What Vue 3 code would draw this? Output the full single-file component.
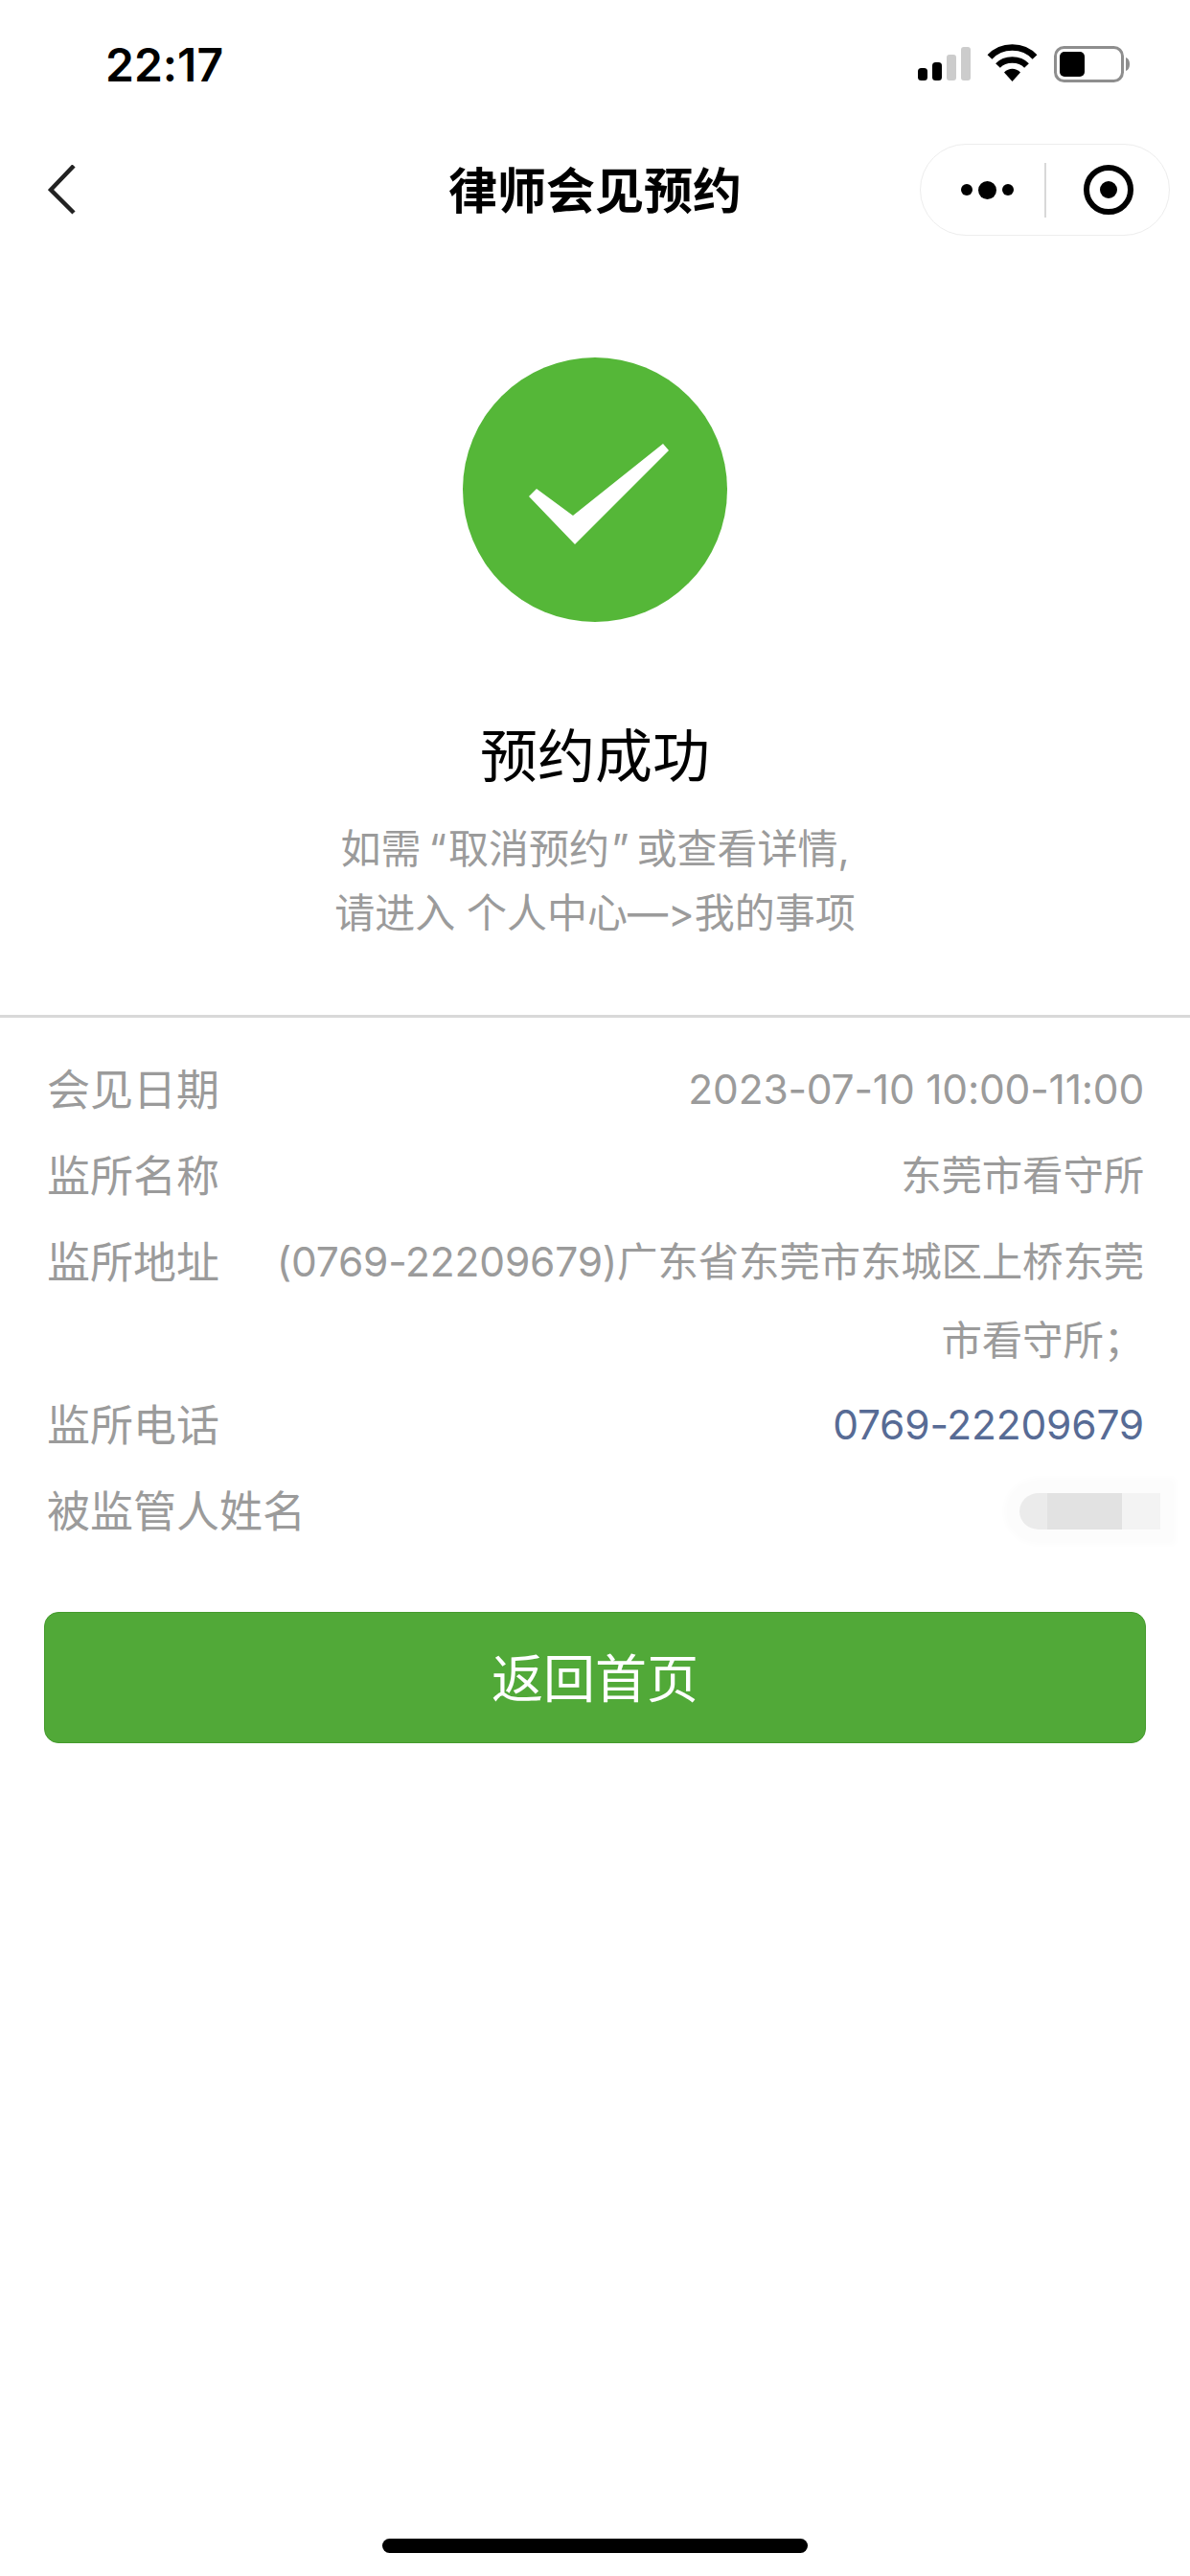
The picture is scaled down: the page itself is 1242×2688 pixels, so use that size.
<template>
  <div class="page">
    <!-- 状态栏 -->
    <div class="status">
      <span class="time">22:17</span>
      <svg class="status-icons" width="230" height="44" viewBox="0 0 230 44">
        <rect x="4" y="26" width="10" height="13" rx="3.5" fill="#000" />
        <rect x="19" y="20" width="10" height="19" rx="3.5" fill="#000" />
        <rect x="34" y="12" width="10" height="27" rx="3" fill="#ccc" />
        <rect x="49" y="4" width="10" height="35" rx="3" fill="#ccc" />
        <path d="M79 14.5C91 1 114 1 126 14.5" fill="none" stroke="#000" stroke-width="6.5" />
        <path d="M87.5 23.5C95 15.5 110 15.5 117.5 23.5" fill="none" stroke="#000" stroke-width="6.5" />
        <path d="M94 30.5C99 25.5 106 25.5 111 30.5L102.5 40Z" fill="#000" />
        <rect x="147.5" y="4.5" width="70" height="35" rx="9" fill="none" stroke="#8e8e8e" stroke-width="3" />
        <rect x="152" y="9" width="26" height="26" rx="5" fill="#000" />
        <path d="M221 15C224 16 225 19 225 22C225 25 224 28 221 29Z" fill="#8e8e8e" />
      </svg>
    </div>

    <!-- 导航栏 -->
    <div class="nav">
      <svg class="back" width="32" height="54" viewBox="0 0 32 54">
        <path d="M27 1L3 26L27 50" fill="none" stroke="#222" stroke-width="4.5" />
      </svg>
      <span class="nav-title">律师会见预约</span>
      <div class="capsule">
        <div class="dots">
          <i class="dot"></i><i class="dot dot-big"></i><i class="dot"></i>
        </div>
        <div class="capsule-line"></div>
        <div class="ring"><i></i></div>
      </div>
    </div>

    <!-- 成功提示 -->
    <div class="result">
      <svg class="ok" width="276" height="276" viewBox="0 0 276 276">
        <circle cx="138" cy="138" r="138" fill="#55b738" />
        <path d="M69 145L77 137L115 165L209 90L215 97L117 195Z" fill="#fff" />
      </svg>
      <h1 class="result-title">预约成功</h1>
      <p class="result-desc">如需<span class="quote-open">“</span>取消预约<span class="quote-close">”</span>或查看详情,<br />请进入 个人中心—&gt;我的事项</p>
    </div>

    <!-- 预约信息 -->
    <div class="info">
      <div v-for="row in rows" :key="row.label" class="row">
        <span class="label">{{ row.label }}</span>
        <span :class="['value', { link: row.link }]">{{ row.value }}</span>
      </div>
      <div class="row">
        <span class="label">被监管人姓名</span>
        <span class="blur"></span>
      </div>
    </div>

    <button class="btn-home">返回首页</button>

    <div class="home-bar"></div>
  </div>
</template>

<script setup>
const rows = [
  { label: '会见日期', value: '2023-07-10 10:00-11:00' },
  { label: '监所名称', value: '东莞市看守所' },
  { label: '监所地址', value: '(0769-22209679)广东省东莞市东城区上桥东莞市看守所；' },
  { label: '监所电话', value: '0769-22209679', link: true }
];
</script>

<style>
body {
  background: #fff;
}
</style>

<style scoped>
.page {
  position: relative;
  height: 2688px;
  overflow: hidden;
  background: #fff;
  font-family: Inter, "Noto Sans CJK SC", sans-serif;
  font-variant-ligatures: none;
  font-feature-settings: "calt" 0;
}

.status {
  display: flex;
  justify-content: space-between;
  align-items: center;
  height: 134px;
  padding: 0 58px 0 110px;
  box-sizing: border-box;
}

.time {
  font-size: 48px;
  font-weight: 600;
  color: #000;
}

.nav {
  position: relative;
  display: flex;
  justify-content: center;
  align-items: center;
  height: 130px;
  padding-bottom: 6px;
  box-sizing: border-box;
}

.back {
  position: absolute;
  left: 50px;
  top: 38px;
}

.nav-title {
  font-size: 51px;
  font-weight: 700;
  color: #000;
}

.capsule {
  position: absolute;
  left: 960px;
  top: 16px;
  width: 261px;
  height: 96px;
  box-sizing: border-box;
  display: flex;
  align-items: center;
  border: 1.5px solid #ededed;
  border-radius: 48px;
}

.dots {
  width: 129px;
  padding-left: 10px;
  box-sizing: border-box;
  display: flex;
  justify-content: center;
  align-items: center;
  gap: 6px;
}

.dot {
  width: 12px;
  height: 12px;
  border-radius: 50%;
  background: #000;
}

.dot-big {
  width: 19px;
  height: 19px;
}

.capsule-line {
  width: 1.5px;
  height: 57px;
  background: #d8d8d8;
}

.ring {
  width: 52px;
  height: 52px;
  margin-left: 39px;
  box-sizing: border-box;
  border: 6px solid #000;
  border-radius: 50%;
  display: flex;
  justify-content: center;
  align-items: center;
}

.ring i {
  width: 18px;
  height: 18px;
  border-radius: 50%;
  background: #000;
}

.result {
  display: flex;
  flex-direction: column;
  align-items: center;
  height: 798px;
  padding-top: 109px;
  box-sizing: border-box;
  border-bottom: 3px solid #d9d9d9;
}

.result-title {
  margin: 102px 0 0;
  font-size: 60px;
  line-height: 76px;
  font-weight: 400;
  color: #000;
}

.result-desc {
  margin: 25px 0 0;
  font-size: 42px;
  line-height: 67px;
  color: #9b9b9b;
  text-align: center;
}

.quote-open {
  padding-left: 8px;
  padding-right: 2px;
}

.quote-close {
  padding-left: 2px;
  padding-right: 8px;
}

.info {
  padding: 34px 48px 0 49px;
}

.row {
  display: flex;
  justify-content: space-between;
  align-items: flex-start;
  margin-bottom: 6px;
}

.label {
  flex-shrink: 0;
  font-size: 45px;
  line-height: 84px;
  color: #9b9b9b;
}

.value {
  width: 920px;
  font-size: 42.5px;
  line-height: 82px;
  letter-spacing: -0.2px;
  color: #9b9b9b;
  text-align: right;
}

.link {
  color: #576b95;
}

/* 姓名打码 */
.blur {
  width: 147px;
  height: 38px;
  margin: 22px -17px 0 0;
  border-radius: 20px 0 0 20px / 50% 0 0 50%;
  background: linear-gradient(90deg, #ebebeb 0 20%, #e2e2e2 20% 73%, #f3f3f3 73%);
  box-shadow: 0 0 6px 16px #fcfcfc;
}

.btn-home {
  display: block;
  width: 1150px;
  height: 137px;
  margin: 62px 0 0 46px;
  padding: 0 0 5px;
  font-family: inherit;
  font-size: 54px;
  color: #fff;
  background: #51a938;
  border: 1.5px solid #449a2c;
  border-radius: 15px;
}

.home-bar {
  position: absolute;
  left: 399px;
  top: 2649px;
  width: 444px;
  height: 15px;
  border-radius: 8px;
  background: #000;
}
</style>
